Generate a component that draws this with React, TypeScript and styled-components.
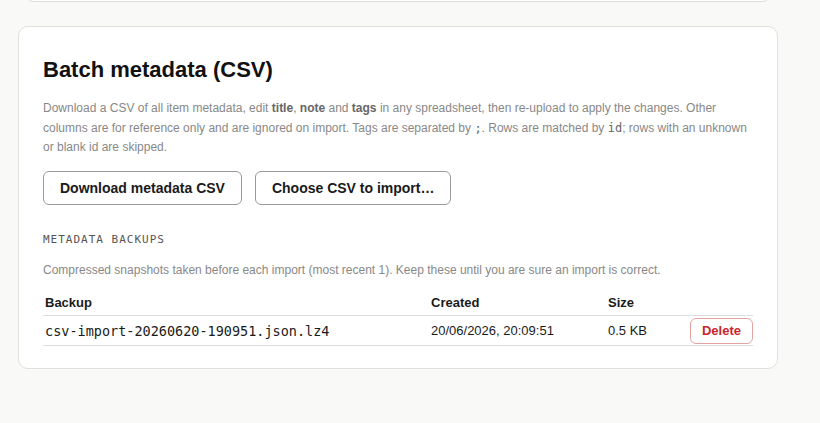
import React from "react";
import styled, { createGlobalStyle } from "styled-components";

const Global = createGlobalStyle`
  html, body { margin: 0; padding: 0; background: #f9f9f7; }
  body { font-family: "Liberation Sans", Arial, sans-serif; color: #1a1a1a; }
`;

const Page = styled.div`
  padding: 0 42px 40px 18px;
  display: flex;
  flex-direction: column;
  gap: 24px;
`;

const PrevCard = styled.div`
  height: 40px;
  margin-top: -40px;
  margin-left: 6px;
  margin-right: 6px;
  background: #fff;
  border: 1px solid #dcdcd8;
  border-radius: 0 0 10px 10px;
`;

const Card = styled.section`
  background: #fff;
  border: 1px solid #e0e0dc;
  border-radius: 10px;
  padding: 24px 24px 22px;
`;

const Title = styled.h2`
  margin: 6px 0 16px;
  font-size: 22px;
  line-height: 26px;
  font-weight: 700;
  color: #111;
`;

const Desc = styled.p`
  margin: 0;
  font-size: 12px;
  line-height: 19.5px;
  color: #888;
  b { color: #666; font-weight: 700; }
  code {
    font-family: "DejaVu Sans Mono", monospace;
    font-size: 12px;
    color: #666;
  }
`;

const Actions = styled.div`
  display: flex;
  gap: 13px;
  margin-top: 13px;
`;

const Button = styled.button`
  height: 34px;
  padding: 0 16px;
  background: #fff;
  border: 1px solid #9a9a9a;
  border-radius: 6px;
  font-family: "Liberation Sans", Arial, sans-serif;
  font-size: 14px;
  font-weight: 700;
  color: #1a1a1a;
  cursor: pointer;
`;

const Label = styled.div`
  margin-top: 28px;
  font-family: "DejaVu Sans Mono", monospace;
  font-size: 11px;
  line-height: 14px;
  letter-spacing: 1px;
  color: #555;
`;

const SubDesc = styled(Desc)`
  margin-top: 14px;
`;

const Table = styled.div`
  margin-top: 12px;
  display: grid;
  grid-template-columns: 386px 177px 1fr auto;
`;

const HeadCell = styled.div`
  padding: 3px 2px 4px;
  font-size: 13px;
  line-height: 16px;
  font-weight: 700;
  color: #1a1a1a;
  border-bottom: 1px solid #dedede;
`;

const Cell = styled.div<{ $mono?: boolean }>`
  display: flex;
  align-items: center;
  min-height: 29px;
  padding: 0 2px;
  font-family: ${(p) =>
    p.$mono ? `"DejaVu Sans Mono", monospace` : `"Liberation Sans", Arial, sans-serif`};
  font-size: ${(p) => (p.$mono ? "13.5px" : "13px")};
  color: #1a1a1a;
  border-bottom: 1px solid #dedede;
`;

const ActionCell = styled(Cell)`
  justify-content: flex-end;
  padding: 0;
`;

const DangerButton = styled.button`
  height: 26px;
  padding: 0 11px;
  background: #fff;
  border: 1px solid #e6a3a3;
  border-radius: 6px;
  font-family: "Liberation Sans", Arial, sans-serif;
  font-size: 13px;
  font-weight: 700;
  color: #c8262c;
  cursor: pointer;
`;

const backups = [
  {
    name: "csv-import-20260620-190951.json.lz4",
    created: "20/06/2026, 20:09:51",
    size: "0.5 KB",
  },
];

export default function App() {
  return (
    <>
      <Global />
      <Page>
        <PrevCard />
        <Card>
          <Title>Batch metadata (CSV)</Title>
          <Desc>
            Download a CSV of all item metadata, edit <b>title</b>, <b>note</b> and{" "}
            <b>tags</b> in any spreadsheet, then re-upload to apply the changes. Other
            columns are for reference only and are ignored on import. Tags are separated by{" "}
            <code>;</code>. Rows are matched by <code>id</code>; rows with an unknown or blank
            id are skipped.
          </Desc>
          <Actions>
            <Button>Download metadata CSV</Button>
            <Button>Choose CSV to import…</Button>
          </Actions>
          <Label>METADATA BACKUPS</Label>
          <SubDesc>
            Compressed snapshots taken before each import (most recent 1). Keep these until you
            are sure an import is correct.
          </SubDesc>
          <Table>
            <HeadCell>Backup</HeadCell>
            <HeadCell>Created</HeadCell>
            <HeadCell>Size</HeadCell>
            <HeadCell />
            {backups.map((b) => (
              <React.Fragment key={b.name}>
                <Cell $mono>{b.name}</Cell>
                <Cell>{b.created}</Cell>
                <Cell>{b.size}</Cell>
                <ActionCell>
                  <DangerButton>Delete</DangerButton>
                </ActionCell>
              </React.Fragment>
            ))}
          </Table>
        </Card>
      </Page>
    </>
  );
}
